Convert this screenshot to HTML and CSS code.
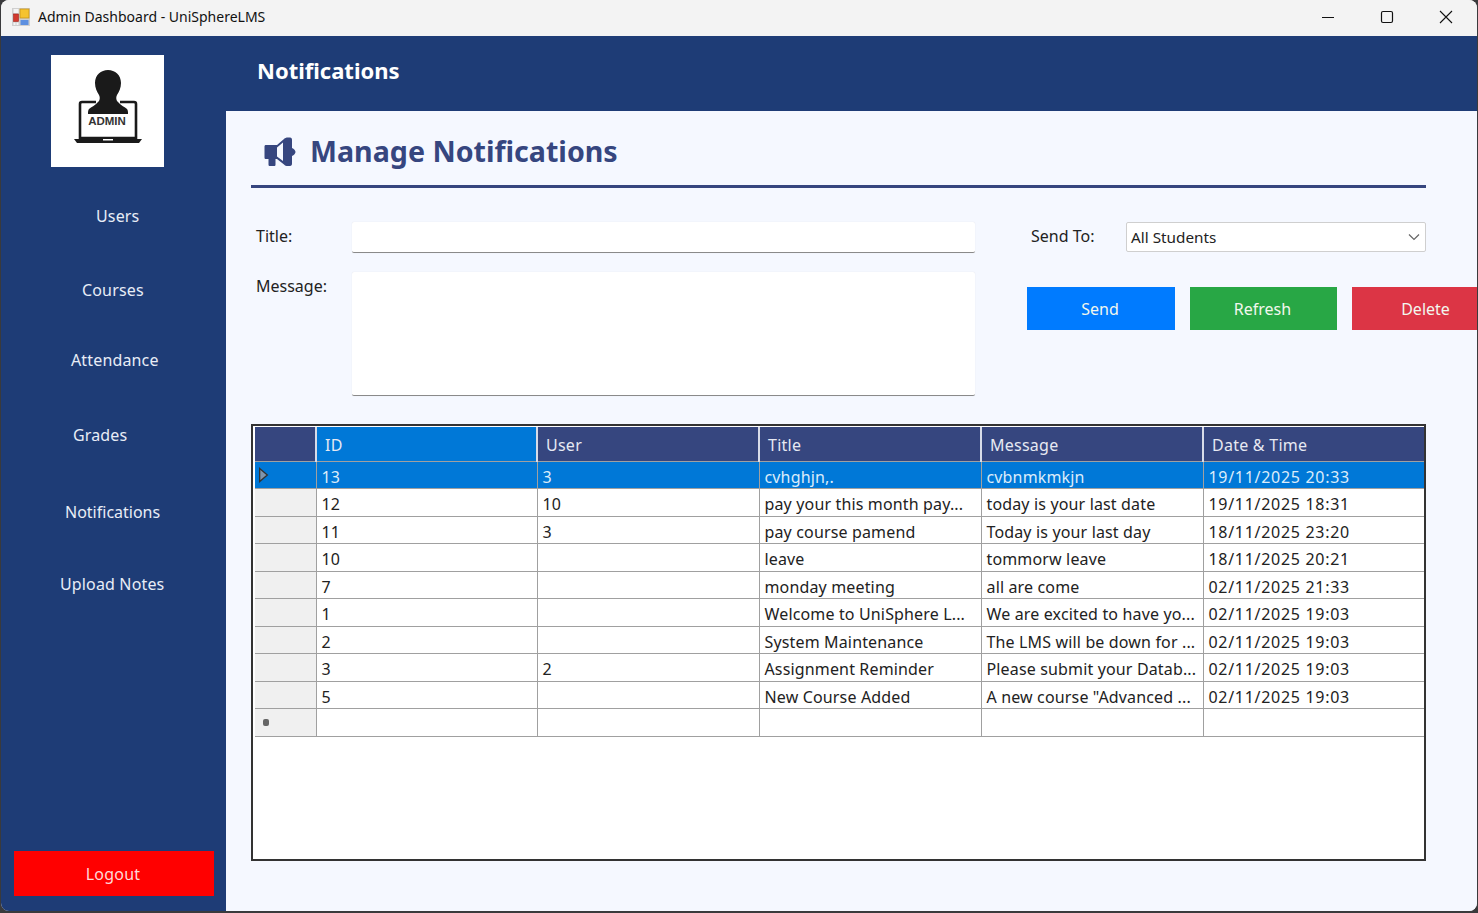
FILE: index.html
```html
<!DOCTYPE html>
<html lang="en">
<head>
  <meta charset="UTF-8" />
  <title>Admin Dashboard - UniSphereLMS</title>
  <link rel="stylesheet" href="styles.css">
</head>
<body>
  <div class="window">
    <div class="titlebar">
      <svg class="app-icon" width="18" height="18" viewBox="0 0 18 18">
        <rect x="0" y="0" width="18" height="18" fill="#cfcfcf"/>
        <rect x="1.500" y="1" width="5" height="4" fill="#f4f4f4"/>
        <rect x="1.500" y="14.500" width="2" height="2.500" fill="#f4f4f4"/>
        <rect x="4.500" y="14.500" width="2" height="2.500" fill="#f4f4f4"/>
        <rect x="8" y="1" width="9" height="9" fill="#f5c330" stroke="#c8951a" stroke-width="0.8"/>
        <rect x="1.500" y="6" width="5" height="7.500" fill="#d23a2e" stroke="#a8231c" stroke-width="0.6"/>
        <rect x="8.500" y="12" width="8" height="5" fill="#5c8fe0"/>
      </svg>
      <span class="window-title">Admin Dashboard - UniSphereLMS</span>
      <div class="window-controls">
        <svg width="14" height="14" viewBox="0 0 14 14"><path d="M1 7.5H13" stroke="#111" stroke-width="1" fill="none"/></svg>
        <svg width="14" height="14" viewBox="0 0 14 14"><rect x="1.5" y="1.5" width="11" height="11" rx="1.5" stroke="#111" stroke-width="1.2" fill="none"/></svg>
        <svg width="14" height="14" viewBox="0 0 14 14"><path d="M1 1L13 13M13 1L1 13" stroke="#111" stroke-width="1.1" fill="none"/></svg>
      </div>
    </div>

    <div class="app">
      <aside class="sidebar">
        <div class="logo">
          <svg width="70" height="78" viewBox="0 0 70 78">
            <path d="M35 2c7 0 13 5 13 13 0 5-2 9-4 12-1 2-1 4 0 6l1 1c2 3 7 5 9 7 1 1 1 3 1 5H15c0-2 0-4 1-5 2-2 7-4 9-7l1-1c1-2 1-4 0-6-2-3-4-7-4-12C22 7 28 2 35 2Z" fill="#1a1a1a"/>
            <path d="M23 34H9a2 2 0 0 0-2 2V70H63V36a2 2 0 0 0-2-2H47" fill="none" stroke="#1a1a1a" stroke-width="2.600"/>
            <path d="M1 71H69L66 75H4Z" fill="#1a1a1a"/>
            <rect x="30" y="71" width="10" height="1.500" fill="#fff"/>
            <text x="34" y="57" class="logo-text" text-anchor="middle">ADMIN</text>
          </svg>
        </div>
        <nav class="nav">
          <a class="nav-item nav-users">Users</a>
          <a class="nav-item nav-courses">Courses</a>
          <a class="nav-item nav-attendance">Attendance</a>
          <a class="nav-item nav-grades">Grades</a>
          <a class="nav-item nav-notifications">Notifications</a>
          <a class="nav-item nav-upload">Upload Notes</a>
        </nav>
        <button class="logout">Logout</button>
      </aside>

      <div class="main">
        <header class="topbar">Notifications</header>
        <section class="content">
          <div class="heading">
            <svg class="bullhorn" width="32" height="30" viewBox="0 0 32 30">
              <path d="M2 8H13L20 2C21 1 22 .500 24 .500H26C27.500 .500 28 1.500 28 3V11C30 12 31.500 13.500 31.500 15S30 18 28 19V26.500C28 28 27.500 29 26 29H24C22 29 21 28.500 20 27.500L13 22H11.500V27.500C11.500 28.500 11 29 10 29H6C5 29 4.500 28.500 4.500 27.500V22H2C1 22 .500 21.500 .500 20.500V9.500C.500 8.500 1 8 2 8Z" fill="#36467f"/>
              <path d="M13 10.500L19 5.500V24L13 19.500Z" fill="#f5f8ff"/>
            </svg>
            <h2>Manage Notifications</h2>
          </div>

          <div class="form-area">
            <div class="form-left">
              <div class="form-row">
                <label>Title:</label>
                <div class="field title-field"></div>
              </div>
              <div class="form-row">
                <label class="message-label">Message:</label>
                <div class="field message-field"></div>
              </div>
            </div>
            <div class="form-right">
              <div class="send-row">
                <label>Send To:</label>
                <div class="select">
                  <span>All Students</span>
                  <svg width="12" height="8" viewBox="0 0 12 8"><path d="M1 1.500L6 6.500L11 1.500" stroke="#666" stroke-width="1.200" fill="none"/></svg>
                </div>
              </div>
              <div class="actions">
                <button class="btn btn-send">Send</button>
                <button class="btn btn-refresh">Refresh</button>
                <button class="btn btn-delete">Delete</button>
              </div>
            </div>
          </div>

          <div class="grid-wrap">
            <table class="grid">
              <colgroup>
                <col class="col-head"><col class="col-id"><col class="col-user"><col class="col-title"><col class="col-message"><col class="col-date">
              </colgroup>
              <thead>
                <tr>
                  <th></th>
                  <th class="sorted">ID</th>
                  <th>User</th>
                  <th>Title</th>
                  <th>Message</th>
                  <th>Date &amp; Time</th>
                </tr>
              </thead>
              <tbody>
                <tr class="selected">
                  <td class="row-head"><svg width="11" height="16" viewBox="0 0 10 14"><path d="M1.500 1L8.500 7L1.500 13Z" fill="#7f95ad" stroke="#333" stroke-width="1.200"/></svg></td>
                  <td>13</td><td>3</td><td>cvhghjn,.</td><td>cvbnmkmkjn</td><td class="date">19/11/2025 20:33</td>
                </tr>
                <tr><td class="row-head"></td><td>12</td><td>10</td><td>pay your this month pay...</td><td>today is your last date</td><td class="date">19/11/2025 18:31</td></tr>
                <tr><td class="row-head"></td><td>11</td><td>3</td><td>pay course pamend</td><td>Today is your last day</td><td class="date">18/11/2025 23:20</td></tr>
                <tr><td class="row-head"></td><td>10</td><td></td><td>leave</td><td>tommorw leave</td><td class="date">18/11/2025 20:21</td></tr>
                <tr><td class="row-head"></td><td>7</td><td></td><td>monday meeting</td><td>all are come</td><td class="date">02/11/2025 21:33</td></tr>
                <tr><td class="row-head"></td><td>1</td><td></td><td>Welcome to UniSphere L...</td><td>We are excited to have yo...</td><td class="date">02/11/2025 19:03</td></tr>
                <tr><td class="row-head"></td><td>2</td><td></td><td>System Maintenance</td><td>The LMS will be down for ...</td><td class="date">02/11/2025 19:03</td></tr>
                <tr><td class="row-head"></td><td>3</td><td>2</td><td>Assignment Reminder</td><td>Please submit your Datab...</td><td class="date">02/11/2025 19:03</td></tr>
                <tr><td class="row-head"></td><td>5</td><td></td><td>New Course Added</td><td>A new course "Advanced ...</td><td class="date">02/11/2025 19:03</td></tr>
                <tr class="new-row"><td class="row-head"><span class="star"></span></td><td></td><td></td><td></td><td></td><td></td></tr>
              </tbody>
            </table>
          </div>
        </section>
      </div>
    </div>
  </div>
</body>
</html>
```

FILE: styles.css
```css
* {
  box-sizing: border-box;
}

html, body {
  height: 100%;
}

body {
  margin: 0;
  background-color: #3a3a3c;
  font-family: "Noto Sans", "Open Sans", sans-serif;
  overflow: hidden;
}

.window {
  width: 1476px;
  height: 911px;
  margin-left: 1px;
  border-radius: 8px;
  overflow: hidden;
  display: flex;
  flex-direction: column;
  background-color: #f3f3f3;
}

.titlebar {
  height: 36px;
  flex-shrink: 0;
  display: flex;
  align-items: center;
  padding: 0 0 3px 11px;
  background-color: #f3f3f3;
}

.app-icon {
  margin-right: 8px;
}

.window-title {
  font-size: 14px;
  color: #111;
  white-space: nowrap;
}

.window-controls {
  margin-left: auto;
  margin-right: 24px;
  display: flex;
  gap: 45px;
}

.app {
  flex: 1;
  display: flex;
  min-height: 0;
}

.sidebar {
  width: 225px;
  flex-shrink: 0;
  display: flex;
  flex-direction: column;
  background-color: #1e3c76;
  padding-top: 19px;
}

.logo {
  width: 113px;
  height: 112px;
  margin-left: 50px;
  padding-bottom: 8px;
  background-color: #fff;
  display: flex;
  align-items: center;
  justify-content: center;
}

.logo-text {
  font-family: "Liberation Sans", sans-serif;
  font-size: 11.500px;
  font-weight: bold;
  fill: #333;
}

.nav {
  display: flex;
  flex-direction: column;
}

.nav-item {
  display: block;
  color: #e8edf6;
  font-size: 16px;
  line-height: 22px;
  letter-spacing: 0.150px;
  white-space: nowrap;
}

.nav-users { margin: 38px 0 0 95px; }
.nav-courses { margin: 52px 0 0 81px; }
.nav-attendance { margin: 48px 0 0 70px; }
.nav-grades { margin: 53px 0 0 72px; }
.nav-notifications { margin: 55px 0 0 64px; letter-spacing: 0; }
.nav-upload { margin: 50px 0 0 59px; }

.logout {
  margin: auto 0 15px 13px;
  width: 200px;
  height: 45px;
  border: 0;
  padding: 1px 2px 0 0;
  background-color: #ff0000;
  color: #ffd9d9;
  font-family: inherit;
  font-size: 16px;
  letter-spacing: 0.200px;
}

.main {
  flex: 1;
  min-width: 0;
  display: flex;
  flex-direction: column;
}

.topbar {
  height: 75px;
  flex-shrink: 0;
  background-color: #1e3c76;
  color: #fff;
  font-size: 22px;
  font-weight: bold;
  line-height: 69px;
  padding-left: 31px;
}

.content {
  flex: 1;
  padding: 0 0 0 25px;
  background-color: #f5f8ff;
  overflow: hidden;
}

.heading {
  width: 1175px;
  height: 77px;
  display: flex;
  align-items: center;
  padding-left: 13px;
  border-bottom: 3px solid #36467f;
}

.heading h2 {
  margin: 4px 0 0 14px;
  font-size: 28.600px;
  font-weight: bold;
  color: #36467f;
  white-space: nowrap;
}

.bullhorn {
  margin-top: 8px;
}

.form-area {
  display: flex;
  margin-top: 34px;
}

.form-left {
  width: 724px;
  flex-shrink: 0;
  display: flex;
  flex-direction: column;
  gap: 19px;
}

.form-row {
  display: flex;
}

label {
  font-size: 16px;
  line-height: 22px;
  color: #222;
  white-space: nowrap;
}

.form-row label {
  width: 101px;
  padding-left: 5px;
  padding-top: 3px;
  flex-shrink: 0;
}

.field {
  width: 623px;
  background-color: #fff;
  border-radius: 2px;
  border-bottom: 1px solid #8a8a8a;
  box-shadow: 0 0 1px #d8dbe2;
}

.title-field {
  height: 31px;
}

.message-field {
  height: 124px;
}

.form-right {
  margin-left: 52px;
  flex-shrink: 0;
}

.send-row {
  display: flex;
  align-items: flex-start;
  padding-left: 4px;
}

.send-row label {
  width: 95px;
  padding-top: 3px;
  flex-shrink: 0;
}

.select {
  width: 300px;
  height: 30px;
  display: flex;
  align-items: center;
  justify-content: space-between;
  padding: 0 5px 0 4px;
  background-color: #fff;
  border: 1px solid #cfcfcf;
  border-radius: 2px;
  font-size: 15.300px;
  color: #222;
}

.actions {
  display: flex;
  gap: 15px;
  margin-top: 35px;
}

.btn {
  width: 147px;
  height: 43px;
  border: 0;
  padding: 0 2px 0 0;
  color: #f2f7ee;
  font-family: inherit;
  font-size: 16px;
  flex-shrink: 0;
}

.btn-send {
  width: 148px;
  background-color: #007bff;
}

.btn-refresh { background-color: #28a745; }

.btn-delete {
  padding: 0;
  background-color: #dc3545;
}

.grid-wrap {
  width: 1175px;
  height: 437px;
  margin-top: 28px;
  background-color: #fff;
  border: 2px solid #333;
  padding: 1px 0 0 2px;
}

.grid {
  width: 1169px;
  table-layout: fixed;
  border-collapse: collapse;
  font-size: 16px;
  color: #222;
}

.col-head { width: 61px; }
.col-id { width: 221px; }
.col-user { width: 222px; }
.col-title { width: 222px; }
.col-message { width: 222px; }
.col-date { width: 221px; }

.grid th {
  height: 34px;
  padding: 2px 0 0 8px;
  background-color: #36467f;
  color: #e6e9f2;
  font-weight: normal;
  text-align: left;
  letter-spacing: 0.250px;
  border-left: 2px solid #d8dce8;
  border-bottom: 1px solid #a0a0a0;
}

.grid th:first-child {
  border-left: 0;
}

.grid th.sorted {
  background-color: #0078d7;
}

.grid td {
  height: 27.500px;
  padding: 4px 0 0 5px;
  border: 1px solid #a0a0a0;
  border-top: 0;
  white-space: nowrap;
  overflow: hidden;
  background-color: #fff;
  line-height: 20px;
  letter-spacing: 0.150px;
}

.grid td.date {
  letter-spacing: 0.700px;
}

.grid td:last-child {
  border-right: 0;
}

.grid td.row-head {
  background-color: #f0f0f0;
  padding: 0 0 0 3px;
  border-left: 0;
}

.selected td,
.grid .selected td.row-head {
  background-color: #0078d7;
  color: #dcecfa;
}

.row-head svg {
  display: block;
}

.star {
  display: block;
  width: 6px;
  height: 7px;
  margin: 1px 0 0 5px;
  border-radius: 2px;
  background-color: #666;
}
```
